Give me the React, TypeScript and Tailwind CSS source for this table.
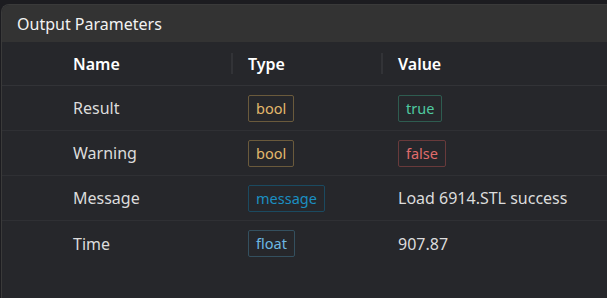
import React from "react";

type Row = {
  name: string;
  type: string;
  typeCls: string;
  value: string;
  valueCls?: string;
};

const rows: Row[] = [
  { name: "Result", type: "bool", typeCls: "text-[#e2b86b] border-[#6a5a3c]", value: "true", valueCls: "text-[#4fc9a0] border-[#2e5c50]" },
  { name: "Warning", type: "bool", typeCls: "text-[#e2b86b] border-[#6a5a3c]", value: "false", valueCls: "text-[#e06c6c] border-[#683a3b]" },
  { name: "Message", type: "message", typeCls: "text-[#1b8fc2] border-[#1b4a60]", value: "Load 6914.STL success" },
  { name: "Time", type: "float", typeCls: "text-[#6cb8e2] border-[#34505f]", value: "907.87" },
];

function Badge({ text, cls }: { text: string; cls: string }) {
  return (
    <span className={`inline-flex items-center h-[27px] px-[7px] border rounded-[2px] text-[14.5px] leading-none ${cls}`}>
      {text}
    </span>
  );
}

export default function App() {
  return (
    <div
      className="w-[607px] h-[298px] bg-[#1c1c20] pt-[4px] pl-[1px] overflow-hidden"
      style={{ fontFamily: '"Noto Sans", "Open Sans", sans-serif' }}
    >
      <div className="h-full rounded-tl-[8px] border-l border-t border-[#3a3a3a] bg-[#26272b] overflow-hidden">
        <div className="h-[37px] bg-[#333333] flex items-center pl-[15px] text-[16px] text-[#f2f2f2]">
          Output Parameters
        </div>
        <div className="grid grid-cols-[54px_175px_150px_1fr] text-[16px]">
          <div className="h-[44px] border-b border-[#323337]" />
          <div className="h-[44px] border-b border-[#323337] flex items-center pl-[17px] font-semibold text-white">Name</div>
          <div className="h-[44px] border-b border-[#323337] flex items-center relative pl-[17px] font-semibold text-white">
            <span className="absolute left-0 top-[11px] h-[21px] w-[2px] bg-[#323337]" />
            Type
          </div>
          <div className="h-[44px] border-b border-[#323337] flex items-center relative pl-[17px] font-semibold text-white">
            <span className="absolute left-0 top-[11px] h-[21px] w-[2px] bg-[#323337]" />
            Value
          </div>
          {rows.map((r, i) => {
            const b = i < rows.length - 1 ? "border-b border-[#2f3034]" : "";
            return (
              <React.Fragment key={r.name}>
                <div className={`h-[45px] ${b}`} />
                <div className={`h-[45px] ${b} flex items-center pl-[17px] text-[#dcdcdc]`}>{r.name}</div>
                <div className={`h-[45px] ${b} flex items-center pl-[17px]`}>
                  <Badge text={r.type} cls={r.typeCls} />
                </div>
                <div className={`h-[45px] ${b} flex items-center pl-[17px] text-[#dcdcdc]`}>
                  {r.valueCls ? <Badge text={r.value} cls={r.valueCls} /> : r.value}
                </div>
              </React.Fragment>
            );
          })}
        </div>
      </div>
    </div>
  );
}
